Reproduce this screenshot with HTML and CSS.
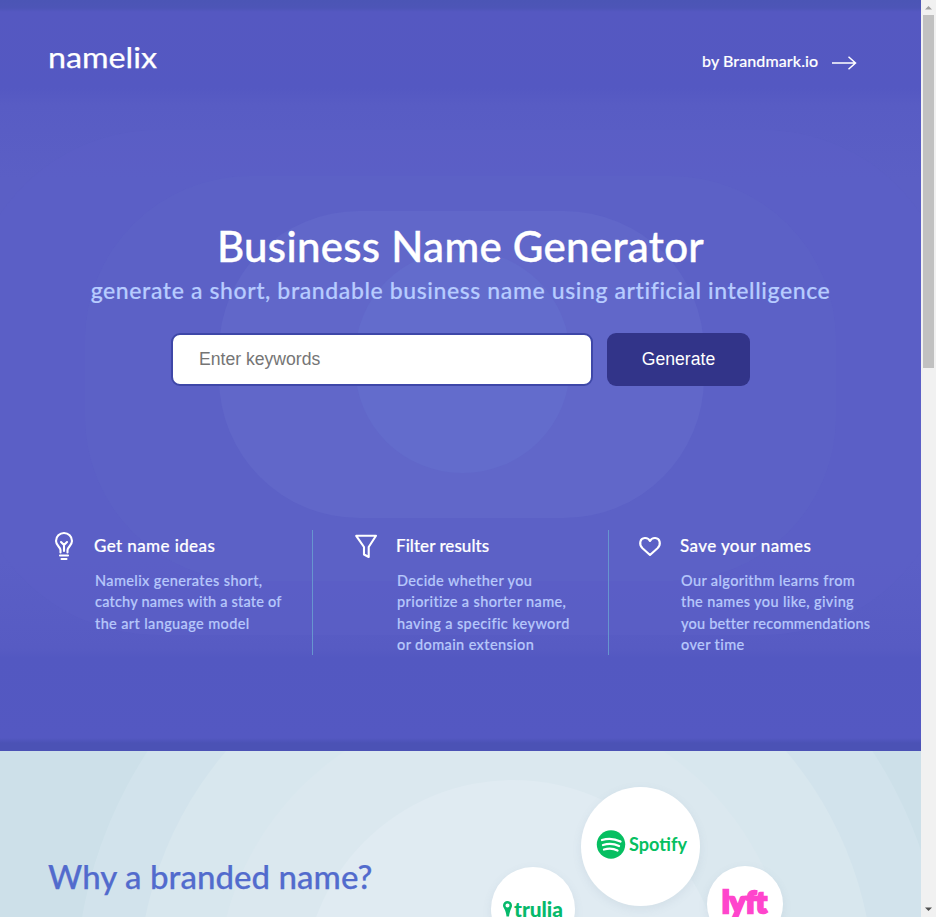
FILE: index.html
```html
<!DOCTYPE html>
<html lang="en">
<head>
<meta charset="utf-8">
<title>Namelix</title>
<link rel="stylesheet" href="styles.css">
</head>
<body>
<div class="window">
  <main class="page">
    <section class="hero">
      <svg class="backdrop" viewBox="0 0 921 751" aria-hidden="true">
        <rect x="-32" y="130" width="985" height="505" rx="190" fill="#5b5fc6" opacity=".6"/>
        <rect x="85" y="176" width="751" height="405" rx="165" fill="#5d62c6" opacity=".7"/>
        <rect x="219" y="211" width="485" height="307" rx="140" fill="#6167c9"/>
        <rect x="355" y="250" width="215" height="223" rx="107" fill="#636ccc"/>
      </svg>
      <header class="topbar">
        <svg class="logo" width="112" height="32" viewBox="0 0 112 32"><text x="0" y="23" textLength="109" lengthAdjust="spacingAndGlyphs">namelix</text></svg>
        <a class="by"><span>by Brandmark.io</span>
          <svg width="26" height="16" viewBox="0 0 26 16"><path d="M0 8H23M16.500 1.800L23.500 8L16.500 14.200"/></svg>
        </a>
      </header>
      <h1>Business Name Generator</h1>
      <p class="tagline">generate a short, brandable business name using artificial intelligence</p>
      <form class="search">
        <input type="text" placeholder="Enter keywords">
        <button type="button">Generate</button>
      </form>
      <div class="features">
        <article class="feature ideas">
          <svg class="icon" width="24" height="32" viewBox="0 0 24 32"><path d="M8.500 22.500V20C8.500 17 4 15.500 4 11A8 8 0 0 1 20 11C20 15.500 15.500 17 15.500 20V22.500M9 12L12 15L15 12M12 15V21M8 25.500H16M9.500 29H14.500"/></svg>
          <div><h2>Get name ideas</h2>
          <p>Namelix generates short,<br><span class="tight">catchy names with a state of</span><br>the art language model</p></div>
        </article>
        <article class="feature filter">
          <svg class="icon" width="24" height="32" viewBox="0 0 24 32"><path d="M2.200 5.800H22L14.700 17V27L10 24.500V17Z"/></svg>
          <div><h2 class="tight">Filter results</h2>
          <p>Decide whether you<br>prioritize a shorter name,<br>having a specific keyword<br>or domain extension</p></div>
        </article>
        <article class="feature save">
          <svg class="icon" width="24" height="32" viewBox="0 0 24 32"><path d="M12 25L4.500 18.200C.5 14 2 8.300 6.800 8C9.300 7.900 11 9 12 11C13 9 14.700 7.900 17.200 8C22 8.300 23.500 14 19.500 18.200Z"/></svg>
          <div><h2>Save your names</h2>
          <p>Our algorithm learns from<br>the names you like, giving<br><span class="tight">you better recommendations</span><br>over time</p></div>
        </article>
      </div>
    </section>
    <section class="why">
      <svg class="backdrop" viewBox="0 0 921 166" aria-hidden="true">
        <circle cx="510" cy="239" r="434" fill="#d2e3ec"/>
        <circle cx="506" cy="239" r="368" fill="#d8e7ee"/>
        <circle cx="504" cy="239" r="287" fill="#dbe8ef"/>
        <circle cx="513" cy="239" r="210" fill="#e0ebf2"/>
      </svg>
      <h2>Why a branded name?</h2>
      <div class="bubbles">
        <div class="bubble spotify">
          <svg width="92" height="34" viewBox="0 0 92 34">
            <circle cx="15" cy="14.500" r="14.200" fill="#06bf61"/>
            <path d="M6 10Q15.500 7 24.500 11.500M7 15Q15.500 12.500 23 16M8 19.500Q15.500 17.500 21.500 20.500" fill="none" stroke="#fff" stroke-width="2.300" stroke-linecap="round"/>
            <text x="33" y="21" textLength="58" lengthAdjust="spacingAndGlyphs">Spotify</text>
          </svg>
        </div>
        <div class="bubble trulia">
          <svg width="62" height="28" viewBox="0 0 62 28">
            <path fill-rule="evenodd" d="M5.500 5A4.500 4.500 0 0 1 10 9.500C10 12 8 13.500 7 20.500H4.500C4 13.500 1 12 1 9.500A4.500 4.500 0 0 1 5.500 5ZM5.500 7.500A2 2 0 0 0 5.500 11.500A2 2 0 0 0 5.500 7.500Z" fill="#06b96b"/>
            <text x="12" y="20.500" textLength="49" lengthAdjust="spacingAndGlyphs">trulia</text>
          </svg>
        </div>
        <div class="bubble lyft">
          <svg width="50" height="44" viewBox="0 0 50 44"><text x="2" y="31" textLength="45" lengthAdjust="spacingAndGlyphs">lyft</text></svg>
        </div>
      </div>
    </section>
  </main>
  <div class="scrollbar" aria-hidden="true">
    <svg width="15" height="15" viewBox="0 0 15 15"><path d="M4 9.500L7.500 6L11 9.500Z" fill="#a0a0a0"/></svg>
    <div class="thumb"></div>
    <svg class="down" width="15" height="15" viewBox="0 0 15 15"><path d="M4 5.500H11L7.500 9Z" fill="#505050"/></svg>
  </div>
</div>
</body>
</html>
```

FILE: styles.css
```css
* { box-sizing: border-box; }
body { margin: 0; overflow: hidden; font-family: Lato, "Liberation Sans", sans-serif; }
h1, h2, p { margin: 0; font-weight: 500; white-space: nowrap; }
svg { overflow: visible; }
.window { display: flex; width: 936px; height: 917px; }
.page { width: 921px; height: 917px; overflow: hidden; }
.hero {
  position: relative;
  height: 751px;
  padding-top: 45px;
  background: linear-gradient(#4b55b5 0, #4d55b7 8px, #5558c1 12px, #5458c2 88px, #585cc4 105px, #5b5fc5 180px, #5b5fc6 560px, #575bc3 648px, #5358c1 658px, #5458c2 738px, #4b52b5 743px, #4b52b5 100%);
}
.backdrop { position: absolute; inset: 0; width: 100%; height: 100%; overflow: hidden; }
.topbar, .hero h1, .tagline, .search, .features, .why h2 { position: relative; }
.topbar { display: flex; justify-content: space-between; height: 32px; padding: 0 63px 0 48px; }
.logo text { font: 400 29px Lato, sans-serif; fill: #fff; stroke: #fff; stroke-width: .25px; }
.by { display: flex; gap: 13px; align-items: center; color: #fff; font-size: 16px; font-weight: 500; letter-spacing: .1px; -webkit-text-stroke: .15px; white-space: nowrap; }
.by span { width: 117px; margin-top: -2px; }
.by svg { margin-top: 4px; fill: none; stroke: #fff; stroke-width: 1.5; }
h1 { margin-top: 143px; height: 52px; line-height: 52px; text-align: center; color: #fff; font-size: 42px; letter-spacing: .3px; -webkit-text-stroke: .4px; }
.tagline { height: 36px; line-height: 36px; text-align: center; color: #b7ccff; font-size: 23px; letter-spacing: .6px; -webkit-text-stroke: .2px; }
.search { display: flex; justify-content: center; gap: 14px; margin-top: 25px; height: 53px; }
.search input, .search button { height: 53px; border-radius: 9px; font: 17.6px "Liberation Sans", Arial, sans-serif; }
.search input { width: 422px; padding: 0 26px; border: 2px solid #3e47a8; background: #fff; }
.search input::placeholder { color: #757575; }
.search button { width: 143px; border: 0; background: #323489; color: #fff; }
.features { display: grid; grid-template-columns: 313px 296px 312px; margin-top: 144px; height: 125px; }
.feature { display: flex; gap: 18px; height: 125px; border-right: 1px solid #6795cf; }
.feature.ideas { padding-left: 52px; }
.feature.filter { padding-left: 41px; }
.feature.save { padding-left: 29px; border-right: 0; }
.icon { flex: none; fill: none; stroke: #fff; stroke-width: 2.1; stroke-linecap: round; stroke-linejoin: round; }
.feature h2 { height: 32px; line-height: 32px; font-size: 17px; color: #fff; letter-spacing: .4px; -webkit-text-stroke: .2px; }
.feature p { margin: 8px 0 0 1px; line-height: 21.4px; font-size: 14.5px; color: #b7c8fb; letter-spacing: .38px; -webkit-text-stroke: .18px; }
.feature p .tight { letter-spacing: .2px; }
.feature h2.tight { letter-spacing: .05px; }
.why { position: relative; height: 166px; padding: 103px 0 0 48px; overflow: hidden; background: #cde0e9; }
.why h2 { color: #526bcd; font-size: 33px; line-height: 44px; letter-spacing: .05px; -webkit-text-stroke: .25px; }
.bubble { position: absolute; display: flex; align-items: center; justify-content: center; border-radius: 50%; background: #fff; box-shadow: 0 3px 10px rgba(90, 120, 150, .1); }
.spotify { left: 581px; top: 36px; width: 119px; height: 119px; }
.spotify svg { margin-left: 2px; }
.trulia { left: 491px; top: 116px; width: 84px; height: 84px; }
.trulia svg { margin-top: 1px; }
.lyft { left: 707px; top: 115px; width: 76px; height: 76px; }
.spotify text { font: 700 19px Lato, sans-serif; fill: #06bf61; }
.trulia text { font: 900 20px Lato, sans-serif; fill: #06b96b; }
.lyft text { font: 900 31px Lato, sans-serif; fill: #ff45cc; stroke: #ff45cc; stroke-width: 2.5px; }
.scrollbar { display: flex; flex-direction: column; width: 15px; height: 917px; background: #f1f1f1; }
.scrollbar svg { flex: none; display: block; }
.thumb { width: 11px; height: 353px; margin-left: 2px; background: #c1c1c1; }
.down { margin-top: auto; }
```
